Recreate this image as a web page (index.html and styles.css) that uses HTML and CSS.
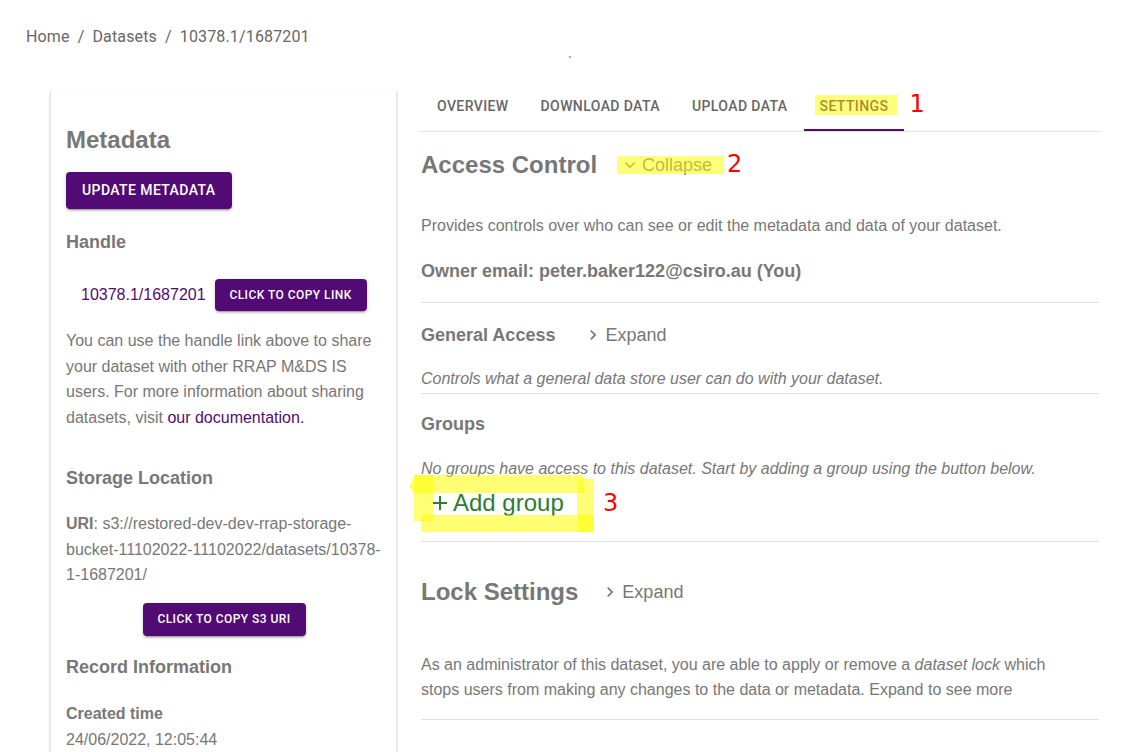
FILE: index.html
```html
<!DOCTYPE html>
<html>
<head>
<meta charset="utf-8">
<link rel="stylesheet" href="styles.css">
</head>
<body>
<div class="page">
  <nav class="breadcrumb">
    <span>Home</span><span class="sep">/</span><span>Datasets</span><span class="sep">/</span><span>10378.1/1687201</span>
  </nav>
  <span class="speck"></span>
  <div class="main">
    <aside class="card">
      <h2 class="card-title">Metadata</h2>
      <button class="btn btn-md">Update Metadata</button>
      <h3 class="sub handle-h">Handle</h3>
      <div class="handle-row">
        <a class="link handle-link">10378.1/1687201</a>
        <button class="btn btn-sm">Click to copy link</button>
      </div>
      <p class="para share">You can use the handle link above to share your dataset with other RRAP M&amp;DS IS users. For more information about sharing datasets, visit <a class="link">our documentation.</a></p>
      <h3 class="sub storage-h">Storage Location</h3>
      <p class="para uri"><b>URI</b>: s3://restored-dev-dev-rrap-storage-bucket-11102022-11102022/datasets/10378-1-1687201/</p>
      <div class="center-row">
        <button class="btn btn-sm s3">Click to copy S3 URI</button>
      </div>
      <h3 class="sub record-h">Record Information</h3>
      <div class="created-label">Created time</div>
      <div class="created-value">24/06/2022, 12:05:44</div>
    </aside>

    <section class="content">
      <div class="tabs">
        <div class="tab">Overview</div>
        <div class="tab">Download Data</div>
        <div class="tab">Upload Data</div>
        <div class="tab active">Settings<span class="indicator"></span>
          <span class="hl hl-settings"></span>
          <span class="anno anno-1">1</span>
        </div>
      </div>

      <div class="row title-row ac-row">
        <h2 class="big">Access Control</h2>
        <span class="toggle toggle-collapse">
          <svg class="chev" viewBox="0 0 24 24" width="20" height="20"><path d="M16.59 8.59 12 13.17 7.41 8.59 6 10l6 6 6-6z"/></svg>
          <span>Collapse</span>
          <span class="hl hl-collapse"></span>
          <span class="anno anno-2">2</span>
        </span>
      </div>
      <p class="text provides">Provides controls over who can see or edit the metadata and data of your dataset.</p>
      <div class="owner">Owner email: peter.baker122@csiro.au (You)</div>
      <hr class="divider d1">

      <div class="row ga-row">
        <h3 class="mid">General Access</h3>
        <span class="toggle toggle-ga">
          <svg class="chev" viewBox="0 0 24 24" width="20" height="20"><path d="M10 6 8.59 7.41 13.17 12l-4.58 4.59L10 18l6-6z"/></svg>
          <span>Expand</span>
        </span>
      </div>
      <p class="text italic ga-text">Controls what a general data store user can do with your dataset.</p>
      <hr class="divider d2">

      <h3 class="mid groups-h">Groups</h3>
      <p class="text italic groups-text">No groups have access to this dataset. Start by adding a group using the button below.</p>
      <div class="add-wrap">
        <span class="add-btn">
          <svg class="plus" viewBox="0 0 24 24" width="24" height="24"><path d="M19 13h-6v6h-2v-6H5v-2h6V5h2v6h6v2z"/></svg>
          <span>Add group</span>
        </span>
        <svg class="frame" width="190" height="70" viewBox="0 0 190 70">
          <g fill="rgba(255,255,0,0.55)">
            <rect x="5" y="8" width="170" height="18"/>
            <rect x="5" y="8" width="19" height="46"/>
            <rect x="12" y="48" width="173" height="17"/>
            <rect x="168" y="12" width="17" height="53"/>
            <polygon points="5,10 0,19 5,27"/>
          </g>
        </svg>
        <span class="anno anno-3">3</span>
      </div>
      <hr class="divider d3">

      <div class="row title-row lock-row">
        <h2 class="big">Lock Settings</h2>
        <span class="toggle toggle-lock">
          <svg class="chev" viewBox="0 0 24 24" width="20" height="20"><path d="M10 6 8.59 7.41 13.17 12l-4.58 4.59L10 18l6-6z"/></svg>
          <span>Expand</span>
        </span>
      </div>
      <p class="text lock-text">As an administrator of this dataset, you are able to apply or remove a <i>dataset lock</i> which stops users from making any changes to the data or metadata. Expand to see more</p>
      <hr class="divider d4">
    </section>
  </div>
</div>
</body>
</html>
```

FILE: styles.css
```css
* { box-sizing: border-box; }
html, body { margin: 0; padding: 0; background: #fff; }
body {
  font-family: "Liberation Sans", Arial, sans-serif;
  color: #767676;
  overflow: hidden;
}
.page {
  position: relative;
  padding: 25px 38px 0 26px;
  height: 752px;
}
.breadcrumb {
  font-family: Roboto, "Liberation Sans", sans-serif;
  font-size: 16px;
  line-height: 24px;
  letter-spacing: 0.15px;
  color: #666;
}
.breadcrumb .sep { margin: 0 8px; }
.speck {
  position: absolute;
  left: 569px;
  top: 56px;
  width: 2px;
  height: 2px;
  background: #aaa;
}
.main {
  display: flex;
  align-items: flex-start;
  gap: 24px;
  margin-top: 34px;
}

/* left card */
.card {
  width: 347px;
  flex: none;
  margin-left: 24px;
  margin-top: 8px;
  padding: 33px 14px 40px 15px;
  min-height: 720px;
  background: #fff;
  box-shadow: 0 2px 1px -1px rgba(0,0,0,0.2), 0 1px 1px 0 rgba(0,0,0,0.14), 0 1px 3px 0 rgba(0,0,0,0.12);
  border-left: 1px solid #e4e2f0;
  border-right: 1px solid #e4e2f0;
}
.card-title {
  margin: 0;
  font-size: 24px;
  line-height: 32px;
  font-weight: 700;
  color: #777;
}
.btn {
  font-family: Roboto, "Liberation Sans", sans-serif;
  font-weight: 500;
  text-transform: uppercase;
  color: #fff;
  background: #520a75;
  border: none;
  border-radius: 4px;
  box-shadow: 0 3px 1px -2px rgba(0,0,0,0.2), 0 2px 2px 0 rgba(0,0,0,0.14), 0 1px 5px 0 rgba(0,0,0,0.12);
  cursor: pointer;
  display: inline-block;
  white-space: nowrap;
}
.btn-md {
  margin-top: 16px;
  font-size: 14px;
  letter-spacing: 0.4px;
  line-height: 25px;
  padding: 6px 16px;
  height: 37px;
}
.btn-sm {
  font-size: 12px;
  letter-spacing: 0.45px;
  line-height: 22px;
  padding: 5px 10px;
  height: 32px;
}
.sub {
  margin: 0;
  font-size: 18px;
  line-height: 24px;
  font-weight: 700;
  color: #777;
}
.handle-h { margin-top: 21px; }
.handle-row {
  display: flex;
  align-items: center;
  margin-top: 25px;
  padding-left: 15px;
  gap: 9px;
}
.handle-row .btn-sm { width: 152px; }
.link { color: #520a75; text-decoration: none; }
.handle-link { font-size: 16px; line-height: 24px; }
.para {
  margin: 0;
  font-size: 16px;
  line-height: 25.6px;
  color: #777;
}
.share { margin-top: 17px; }
.storage-h { margin-top: 36px; }
.uri { margin-top: 21px; line-height: 25.5px; }
.uri b { color: #777; }
.center-row {
  display: flex;
  justify-content: center;
  margin-top: 15px;
}
.s3 { width: 163px; height: 33px; }
.record-h { margin-top: 19px; }
.created-label {
  margin-top: 22px;
  font-size: 16px;
  line-height: 26px;
  font-weight: 700;
  color: #777;
}
.created-value {
  font-size: 16px;
  line-height: 26px;
  color: #777;
}

/* right content */
.content {
  flex: 1;
  min-width: 0;
}
.tabs {
  display: flex;
  border-bottom: 1px solid #e0e0e0;
}
.tab {
  position: relative;
  font-family: Roboto, "Liberation Sans", sans-serif;
  font-weight: 500;
  font-size: 14px;
  letter-spacing: 0.4px;
  text-transform: uppercase;
  line-height: 17.5px;
  padding: 15.25px 16px;
  height: 48px;
  color: #666;
}
.tab.active { color: #520a75; }
.indicator {
  position: absolute;
  left: 0;
  right: 0;
  bottom: 0;
  height: 2px;
  background: #520a75;
}
.hl {
  position: absolute;
  background: rgba(255,255,0,0.52);
  pointer-events: none;
}
.hl-settings { left: 11px; top: 12px; width: 82px; height: 20px; }
.anno {
  position: absolute;
  font-family: "DejaVu Sans", sans-serif;
  font-weight: 400;
  color: #ff0000;
  font-size: 24px;
  line-height: 28px;
  text-transform: none;
  letter-spacing: 0;
}
.anno-1 { left: 106px; top: 7px; }

.row {
  display: flex;
  align-items: center;
}
.big {
  margin: 0;
  font-size: 24px;
  line-height: 32px;
  font-weight: 700;
  color: #777;
}
.mid {
  margin: 0;
  font-size: 18px;
  line-height: 24px;
  font-weight: 700;
  color: #777;
}
.toggle {
  position: relative;
  display: inline-flex;
  align-items: center;
  font-size: 18px;
  line-height: 24px;
  color: #777;
}
.toggle span { position: relative; }
.chev { fill: #777; display: block; margin-right: 2px; }
.ac-row { margin-top: 17px; }
.toggle-collapse { margin-left: 23px; }
.hl-collapse { left: -3px; top: 3px; width: 107px !important; height: 18px; position: absolute !important; }
.anno-2 { left: 107px; top: -3px; position: absolute !important; }
.text {
  margin: 0;
  font-size: 16px;
  line-height: 24px;
  color: #777;
}
.italic { font-style: italic; }
.provides { margin-top: 33px; }
.owner {
  margin-top: 21px;
  font-size: 18px;
  line-height: 24px;
  font-weight: 700;
  color: #777;
}
.divider {
  border: none;
  border-top: 1px solid #e0e0e0;
  margin: 0;
  height: 0;
}
.d1 { margin-top: 19px; }
.ga-row { margin-top: 20px; }
.toggle-ga { margin-left: 28px; }
.ga-text { margin-top: 20px; }
.d2 { margin-top: 2px; }
.groups-h { margin-top: 18px; }
.groups-text { margin-top: 21px; }
.add-wrap {
  position: relative;
  margin-top: 6px;
  height: 32px;
}
.add-btn {
  display: inline-flex;
  align-items: center;
  margin-left: 7px;
  font-size: 24px;
  line-height: 32px;
  color: #2e7d32;
}
.plus { fill: #2e7d32; display: block; margin-right: 1px; }
.frame {
  position: absolute;
  left: -12px;
  top: -20px;
  pointer-events: none;
}
.anno-3 { left: 182px; top: 2px; }
.d3 { margin-top: 22px; }
.lock-row { margin-top: 34px; }
.toggle-lock { margin-left: 22px; }
.lock-text {
  margin-top: 44px;
  line-height: 25px;
  width: 640px;
}
.d4 { margin-top: 17px; }
```
